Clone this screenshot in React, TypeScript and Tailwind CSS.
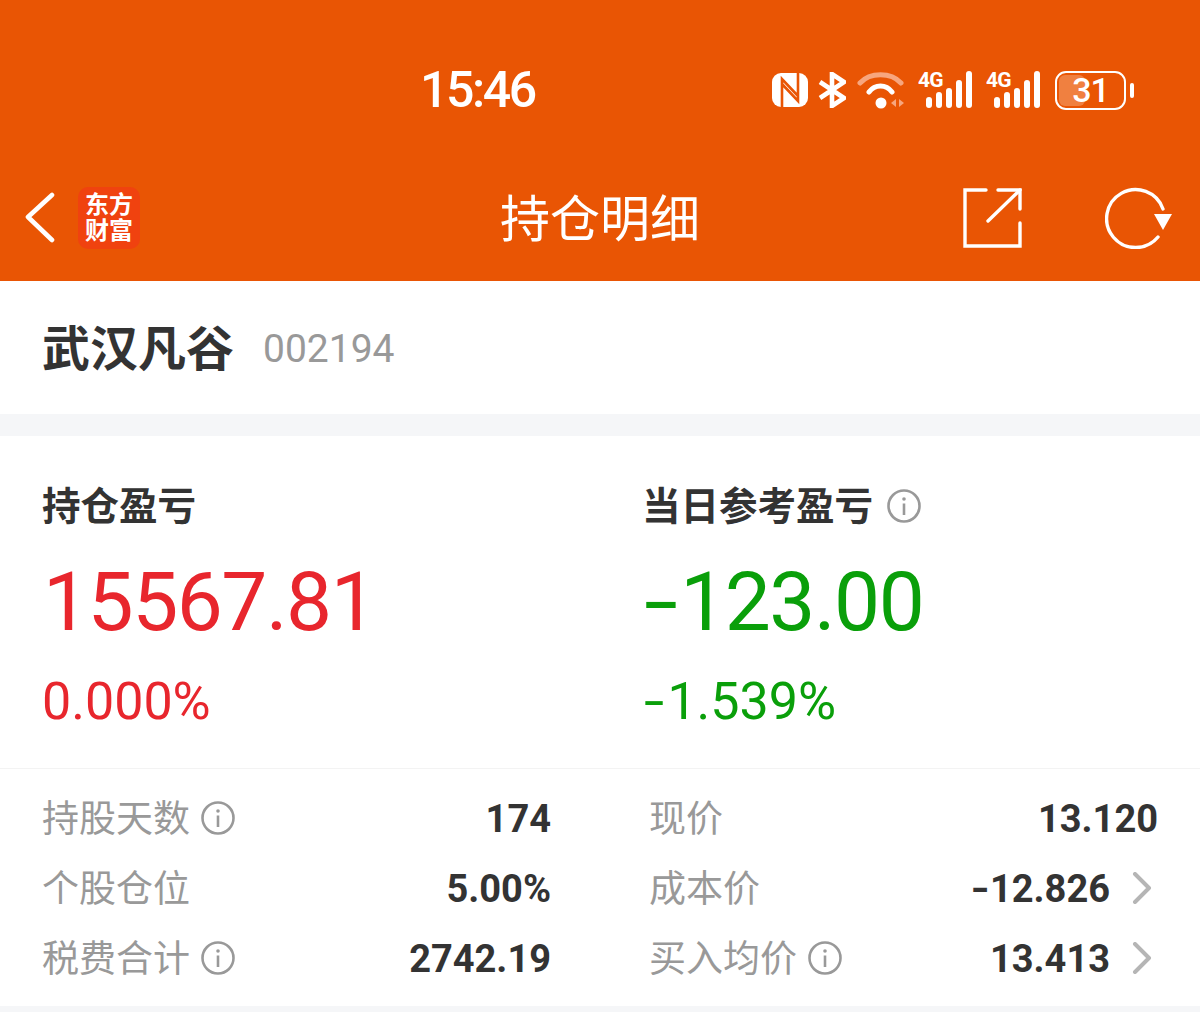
import React from "react";

const cjk = "font-['Roboto','Noto_Sans_CJK_SC',sans-serif]";

const InfoIcon = ({ className = "" }: { className?: string }) => (
  <svg className={className} width="34" height="34" viewBox="0 0 34 34" fill="none" stroke="#999999" strokeWidth="2.6">
    <circle cx="17" cy="17" r="15.5" />
    <circle cx="17" cy="10" r="1.8" fill="#999999" stroke="none" />
    <path d="M17 14.5V26" />
  </svg>
);

const Signal = () => (
  <svg className="-mt-[6px]" width="56" height="44" viewBox="0 -6 56 44" fill="#ffffff">
    <text x="0" y="16" fontSize="21" fontWeight="700" fontFamily="Roboto" letterSpacing="-0.8">4G</text>
    <rect x="8" y="26" width="6" height="11" rx="3" />
    <rect x="18" y="21" width="6" height="16" rx="3" />
    <rect x="28" y="17" width="6" height="20" rx="3" />
    <rect x="38" y="9" width="6" height="28" rx="3" />
    <rect x="48" y="0" width="6" height="37" rx="3" />
  </svg>
);

const StatusIcons = () => (
  <div className="flex items-center">
    <svg width="36" height="36" viewBox="0 0 36 36" fill="none">
      <rect x="0" y="1" width="36" height="34" rx="9" fill="#ffffff" />
      <path d="M10 35V7L26 24M26 1V29L10 12" stroke="#E95504" strokeWidth="2.6" />
    </svg>
    <svg className="ml-[10px]" width="28" height="36" viewBox="0 0 28 36" fill="none" stroke="#ffffff" strokeWidth="4.6">
      <path d="M2 10L26 26L14 34V2L26 10L2 26" />
    </svg>
    <svg className="ml-[11px]" width="48" height="40" viewBox="0 0 48 40" fill="none">
      <path d="M3 13C13 2 34 2 44 13" stroke="#F7A67E" strokeWidth="5" strokeLinecap="round" />
      <path d="M12 22C18 14 29 14 35 22" stroke="#ffffff" strokeWidth="5" strokeLinecap="round" />
      <circle cx="24" cy="33" r="5.5" fill="#ffffff" />
      <path d="M39 29V37L34 33ZM42 29L47 33L42 37Z" fill="#F7A67E" />
    </svg>
    <div className="ml-[13px]"><Signal /></div>
    <div className="ml-[12px]"><Signal /></div>
    <div className="relative ml-[13px] flex h-[39px] w-[71px] items-center justify-center rounded-[11px] border-[2.5px] border-white">
      <div className="absolute inset-y-[2px] left-[2px] w-[26px] rounded-[6px] bg-[#F08040]" />
      <span className="relative text-[34px] font-medium leading-none tracking-[-1px] text-white">31</span>
    </div>
    <div className="ml-[4px] h-[15px] w-[4px] rounded-full bg-white" />
  </div>
);

const Row = ({ label, value, info, arrow }: { label: string; value: string; info?: boolean; arrow?: boolean }) => (
  <div className="flex h-[70px] items-center justify-between">
    <div className="flex items-center gap-[11px] text-[37px] leading-none text-[#999999]">
      <span>{label}</span>
      {info && <InfoIcon className="mb-[3px]" />}
    </div>
    <div className="flex items-center">
      <span className="text-[38px] font-bold leading-none text-[#333333]">
        {value.startsWith("-") && <span className="inline-block origin-right scale-x-[1.3]">-</span>}
        {value.replace("-", "")}
      </span>
      {arrow && (
        <svg className="ml-[22px] mr-[6px] -mt-[3px]" width="20" height="32" viewBox="0 0 20 32" fill="none" stroke="#b5b5b5" strokeWidth="4" strokeLinecap="round" strokeLinejoin="round">
          <path d="M3 2L17 16L3 30" />
        </svg>
      )}
    </div>
  </div>
);

export default function App() {
  return (
    <div className={`h-[1012px] w-[1200px] overflow-hidden bg-white ${cjk}`}>
      <header className="h-[281px] bg-[#E95504] text-white">
        <div className="flex h-[157px] items-center pl-[420px] pt-[23px]">
          <span className="w-[352px] text-[50px] font-medium leading-[56px] tracking-[-2.4px]">15:46</span>
          <StatusIcons />
        </div>
        <div className="relative flex h-[124px] items-start justify-between pl-[25px] pr-[27px] pt-[30px]">
          <div className="flex items-center gap-[20px]">
            <svg width="33" height="52" viewBox="0 0 33 52" fill="none" stroke="#ffffff" strokeWidth="4.6" strokeLinecap="round" strokeLinejoin="round">
              <path d="M27 3L3 25L27 48" />
            </svg>
            <div className="flex h-[62px] w-[62px] flex-col items-center justify-center rounded-[10px] bg-[#F0420F] text-[24px] font-bold leading-[26px]">
              <span>东方</span>
              <span>财富</span>
            </div>
          </div>
          <h1 className="absolute left-0 right-0 top-[31px] text-center text-[50px] font-normal leading-[64px]">持仓明细</h1>
          <div className="flex items-center gap-[81px]">
            <svg width="62" height="62" viewBox="0 0 62 62" fill="none" stroke="#ffffff" strokeWidth="3.4" strokeLinecap="round">
              <path d="M24 3H3V59H58V36" />
              <path d="M36 3H58V22" />
              <path d="M58 3L26 34" />
            </svg>
            <svg width="68" height="62" viewBox="0 0 68 62" fill="none">
              <path d="M53 50A29 29 0 1 1 58 22" stroke="#ffffff" strokeWidth="3.4" strokeLinecap="round" />
              <path d="M49 27H67L58 43Z" fill="#ffffff" />
            </svg>
          </div>
        </div>
      </header>

      <section className="flex h-[133px] items-center px-[42px] pt-[4px]">
        <span className="text-[48px] font-bold leading-none text-[#333333]">武汉凡谷</span>
        <span className="ml-[29px] text-[39px] font-normal leading-none text-[#999999]">002194</span>
      </section>
      <div className="h-[22px] bg-[#F5F6F8]" />

      <section className="grid h-[333px] grid-cols-2 border-b border-[#F3F3F3] pl-[42px] pt-[49px]">
        <div>
          <div className="text-[38.5px] font-bold leading-[44px] text-[#333333]">持仓盈亏</div>
          <div className="ml-[1px] mt-[27px] text-[82px] leading-[92px] tracking-[-1.5px] text-[#E8262D]">15567.81</div>
          <div className="mt-[24px] text-[52px] leading-[60px] text-[#E8262D]">0.000%</div>
        </div>
        <div className="pl-[21px]">
          <div className="flex items-center gap-[14px]">
            <span className="text-[38.5px] font-bold leading-[44px] text-[#333333]">当日参考盈亏</span>
            <InfoIcon className="mb-[3px]" />
          </div>
          <div className="ml-[2px] mt-[27px] text-[82px] leading-[92px] tracking-[-1.5px] text-[#0A9F0A]">
            <span className="mr-[15px] inline-block origin-left scale-x-[1.5]">-</span>123.00
          </div>
          <div className="ml-[2px] mt-[24px] text-[52px] leading-[60px] text-[#0A9F0A]">
            <span className="mr-[9px] inline-block origin-left scale-x-[1.4]">-</span>1.539%
          </div>
        </div>
      </section>

      <section className="grid h-[237px] grid-cols-2 gap-x-[98px] pl-[42px] pr-[42px] pt-[15px]">
        <div>
          <Row label="持股天数" value="174" info />
          <Row label="个股仓位" value="5.00%" />
          <Row label="税费合计" value="2742.19" info />
        </div>
        <div>
          <Row label="现价" value="13.120" />
          <Row label="成本价" value="-12.826" arrow />
          <Row label="买入均价" value="13.413" info arrow />
        </div>
      </section>
      <div className="h-[6px] bg-[#F5F6F8]" />
    </div>
  );
}
